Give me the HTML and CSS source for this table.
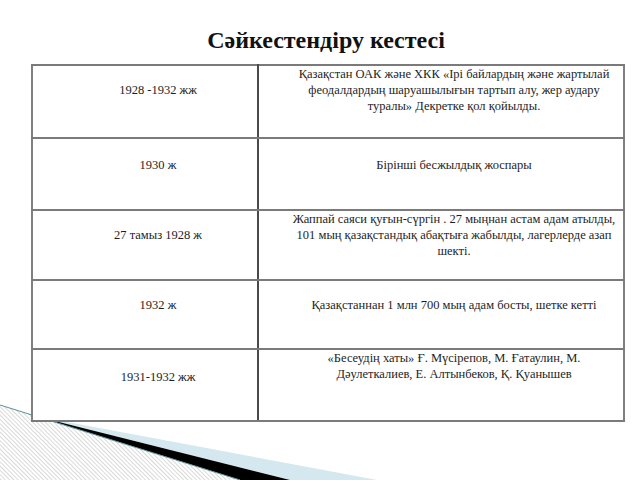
FILE: index.html
```html
<!DOCTYPE html>
<html lang="kk">
<head>
<meta charset="utf-8">
<title>Сәйкестендіру кестесі</title>
<link rel="stylesheet" href="styles.css">
</head>
<body>
<div class="slide">
  <svg class="deco" width="640" height="480" viewBox="0 0 640 480" aria-hidden="true">
    <defs>
      <pattern id="hatch" width="3" height="3" patternUnits="userSpaceOnUse" patternTransform="rotate(-45)">
        <rect width="3" height="3" fill="#ffffff"/>
        <line x1="0" y1="0" x2="0" y2="3" stroke="#b4b4b4" stroke-width="1"/>
      </pattern>
    </defs>
    <polygon points="35,416 377,480 290,480" fill="#d5e8ef"/>
    <polygon points="35,416 290,480 240,480" fill="#000000"/>
    <polygon points="0,405 240,480 0,480" fill="url(#hatch)"/>
    <line x1="0" y1="405" x2="240" y2="480" stroke="#5f8f99" stroke-width="1"/>
  </svg>
  <h1 class="title">Сәйкестендіру кестесі</h1>
  <table class="match">
    <tr class="r1">
      <td class="left">1928 -1932 жж</td>
      <td class="right">Қазақстан ОАК және ХКК «Ірі байлардың және жартылай феодалдардың шаруашылығын тартып алу, жер аудару туралы» Декретке қол қойылды.</td>
    </tr>
    <tr class="r2">
      <td class="left">1930 ж</td>
      <td class="right">Бірінші бесжылдық жоспары</td>
    </tr>
    <tr class="r3">
      <td class="left">27 тамыз 1928 ж</td>
      <td class="right">Жаппай саяси қуғын-сүргін . 27 мыңнан астам адам атылды, 101 мың қазақстандық абақтыға жабылды, лагерлерде азап шекті.</td>
    </tr>
    <tr class="r4">
      <td class="left">1932 ж</td>
      <td class="right">Қазақстаннан 1 млн 700 мың адам босты, шетке кетті</td>
    </tr>
    <tr class="r5">
      <td class="left">1931-1932 жж</td>
      <td class="right">«Бесеудің хаты» Ғ. Мүсірепов, М. Ғатаулин, М. Дәулеткалиев, Е. Алтынбеков, Қ. Қуанышев</td>
    </tr>
  </table>
</div>
</body>
</html>
```

FILE: styles.css
```css
html, body {
  margin: 0;
  padding: 0;
  background: #ffffff;
}

.slide {
  position: relative;
  width: 640px;
  height: 480px;
  overflow: hidden;
  font-family: "Liberation Serif", "DejaVu Serif", serif;
  color: #1e1e1e;
}

.deco {
  position: absolute;
  left: 0;
  top: 0;
  z-index: 0;
}

.title {
  position: relative;
  z-index: 1;
  margin: 0;
  padding: 25px 0 0 12px;
  height: 39px;
  box-sizing: content-box;
  text-align: center;
  font-family: "Liberation Serif", "DejaVu Serif", serif;
  font-size: 24px;
  line-height: 30px;
  font-weight: bold;
  color: #111111;
}

.match {
  position: relative;
  z-index: 1;
  margin-left: 31px;
  width: 594px;
  table-layout: fixed;
  border-collapse: collapse;
  background: #ffffff;
  border: 2px solid #808080;
}

.match td {
  vertical-align: top;
  text-align: center;
  font-family: "Liberation Serif", "DejaVu Serif", serif;
  font-size: 12.5px;
  line-height: 16px;
  padding: 0 4px 0 30px;
  border-top: 2px solid #7a7a7a;
  border-bottom: 2px solid #7a7a7a;
}

.match td.left {
  width: 190px;
  border-right: 2px solid #4a4a4a;
}

.r1 td.left { padding-top: 16px; height: 55px; }
.r2 td.left { padding-top: 18px; height: 52px; }
.r3 td.left { padding-top: 16px; height: 52px; }
.r4 td.left { padding-top: 16px; height: 51px; }
.r5 td.left { padding-top: 19px; height: 51px; }

.r1 td.right { padding-top: 0; height: 71px; }
.r2 td.right { padding-top: 18px; height: 52px; }
.r3 td.right { padding-top: 0; height: 68px; }
.r4 td.right { padding-top: 16px; height: 51px; }
.r5 td.right { padding-top: 0; height: 70px; }
```
